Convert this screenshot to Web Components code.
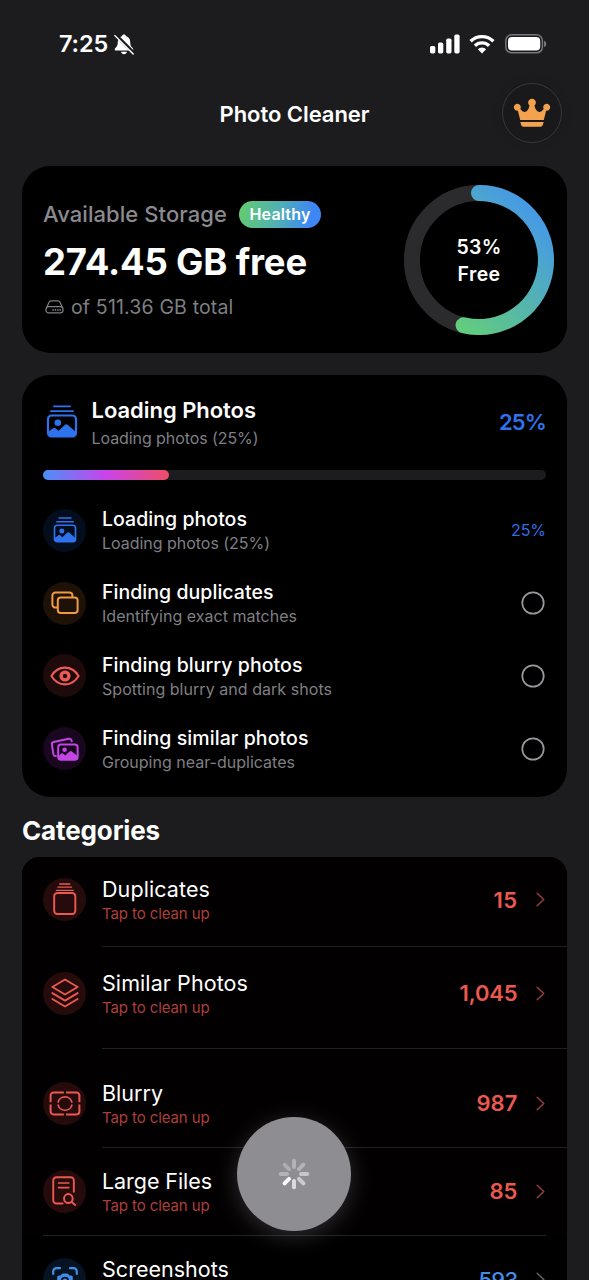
<!DOCTYPE html>
<html lang="en">
<head>
<meta charset="utf-8">
<title>Photo Cleaner</title>
<style>
html,body{margin:0;height:100%;overflow:hidden;background:#1c1c1e}
body{font-family:Inter,"Liberation Sans",sans-serif;color:#fff}
</style>
</head>
<body>
<photo-cleaner></photo-cleaner>
<script>
const ICONS = {
  bell: ['0 0 20 22', `<path fill="#fff" d="M10 .6c-1 0-1.700.6-1.900 1.500C5.200 3 3.900 5.300 3.800 8c-.1 3.500-.6 4.700-2.200 6.500-.7.8-.9 1.300-.8 1.900.1.700.7 1 1.400 1h15.600c.7 0 1.300-.3 1.400-1 .1-.6-.1-1.100-.8-1.900C16.800 12.700 16.300 11.500 16.200 8c-.1-2.700-1.400-5-4.300-5.900C11.700 1.200 11 .6 10 .6zM7 18.700c.3 1.500 1.500 2.500 3 2.500s2.700-1 3-2.500z"/><path d="M1.700.9 19.900 20" stroke="#1c1c1e" stroke-width="3.600"/><path d="M.9 1.700 19.200 20.900" stroke="#fff" stroke-width="1.500" stroke-linecap="round"/>`],
  signal: ['0 0 30 20', `<g fill="#fff"><rect x="0" y="12" width="5.300" height="7.400" rx="1.600"/><rect x="8" y="8.600" width="5.300" height="10.800" rx="1.600"/><rect x="16.200" y="4.600" width="5.300" height="14.800" rx="1.600"/><rect x="24.300" y=".6" width="5.300" height="18.800" rx="1.600"/></g>`],
  wifi: ['0 0 26 20', `<g fill="none" stroke="#fff" stroke-width="3.400"><path d="M1.600 7.300a16.200 16.200 0 0 1 22.800 0"/><path d="M5.900 11.800a10 10 0 0 1 14.200 0"/></g><path fill="#fff" d="M13 19.400 8.900 15.200a5.800 5.800 0 0 1 8.200 0z"/>`],
  battery: ['0 0 42 20', `<rect x=".8" y=".8" width="36.600" height="18" rx="5.800" fill="none" stroke="#77777a" stroke-width="1.500"/><rect x="3" y="3" width="32.200" height="13.600" rx="4" fill="#fff"/><path d="M39 6.700c3 1 3 5.500 0 6.400z" fill="#77777a"/>`],
  crown: ['0 0 38 30', `<path fill="#f4a24e" d="M7.200 22.300 4.900 12.900A3.500 3.500 0 1 1 7.300 11.300c2.200 2.900 4.300 3.600 6.200 2.300 1.600-1.200 2.400-3.200 3-6a3.900 3.900 0 1 1 5 0c.6 2.800 1.400 4.800 3 6 1.900 1.300 4 .6 6.200-2.300a3.500 3.500 0 1 1 2.400 1.600l-2.300 9.400zM7.300 24.300h23.400l-.8 3c-.3 1.300-1.200 1.900-2.500 1.900H10.600c-1.300 0-2.200-.6-2.500-1.900z"/>`],
  drive: ['0 0 20 15', `<g fill="none" stroke="currentColor" stroke-width="1.300"><path d="M1.300 9 4.200 2.500C4.600 1.500 5.300 1 6.400 1h7.200c1.100 0 1.800.5 2.200 1.500L18.700 9"/><rect x="1.100" y="7.200" width="17.800" height="6.600" rx="2.600"/></g><g fill="currentColor"><circle cx="8.500" cy="10.600" r=".9"/><circle cx="11" cy="10.600" r=".9"/><circle cx="13.500" cy="10.600" r=".9"/><circle cx="16" cy="10.600" r=".9"/></g>`],
  photos: ['0 0 32 34', `<path d="M8 1.400h16M5 6.300h22" stroke="currentColor" stroke-width="2" stroke-linecap="round"/><rect x="2" y="10.800" width="28" height="21.600" rx="3.600" fill="none" stroke="currentColor" stroke-width="2.200"/><circle cx="11.800" cy="18.200" r="3.300" fill="currentColor"/><path fill="currentColor" d="M2 27.700 7 23.900c.8-.7 1.700-.7 2.500 0l3 2.600 6.300-5.900c1-.9 2.100-.9 3.100 0l8.100 7.100v1.900c0 1.600-1 2.600-2.600 2.600H4.600C3 32.200 2 31.200 2 29.600z"/>`],
  copies: ['0 0 28 24', `<g fill="none" stroke="currentColor" stroke-width="2"><path d="M6.600 16.600H4.400A3 3 0 0 1 1.400 13.600V4.600a3 3 0 0 1 3-3H18.400a3 3 0 0 1 3 3V6"/><rect x="6.800" y="6.600" width="19.800" height="15.400" rx="3"/></g>`],
  eye: ['0 0 30 20', `<path d="M1.400 10C4.500 4.900 9.300 1.600 15 1.600S25.500 4.900 28.600 10C25.500 15.100 20.700 18.400 15 18.400S4.500 15.100 1.400 10z" fill="none" stroke="currentColor" stroke-width="2.100" stroke-linejoin="round"/><circle cx="15" cy="10" r="3.900" fill="none" stroke="currentColor" stroke-width="3.400"/>`],
  similar: ['0 0 28 24', `<g fill="none" stroke="currentColor" stroke-width="2"><path d="M5.700 18.800 4.600 19c-1.300.2-1.900-.3-2.200-1.600L.9 7.600C.7 6.200 1.200 5.300 2.600 5L17.700 1.800c1.500-.3 2.500.3 2.900 1.900L21 5"/><rect x="7.200" y="7.400" width="19.400" height="15.400" rx="2.800"/></g><circle cx="13.600" cy="12.800" r="2.300" fill="currentColor"/><path fill="currentColor" d="m7.200 19.200 2.900-2.500c.7-.6 1.300-.6 2 0l2.100 1.800 4.400-4c.8-.7 1.500-.7 2.300 0l5.700 4.600v2.200c0 .9-.6 1.500-1.500 1.500H8.700c-.9 0-1.500-.6-1.500-1.500z"/>`],
  stack: ['0 0 24 32', `<path d="M6.800 1h10.400M5 4.200h14M3.400 7.300h17.200" stroke="currentColor" stroke-width="1.300" stroke-linecap="round"/><rect x="1.200" y="10.100" width="21.600" height="20.900" rx="3.200" fill="none" stroke="currentColor" stroke-width="2"/>`],
  layers: ['0 0 28 30', `<g fill="none" stroke="currentColor" stroke-width="1.900" stroke-linejoin="round" stroke-linecap="round"><path d="M14 1.500 26.600 9 14 16.500 1.400 9z"/><path d="m1.400 15.100 12.600 7.500 12.600-7.500M1.400 21l12.600 7.500L26.600 21"/></g>`],
  blur: ['0 0 32 26', `<g fill="none" stroke="currentColor" stroke-width="2"><path d="M14.900 1.600H4.600a3 3 0 0 0-3 3v7M17.100 1.600h10.300a3 3 0 0 1 3 3v7M1.600 14v7.400a3 3 0 0 0 3 3h10.300M30.400 14v7.400a3 3 0 0 1-3 3H17.100"/></g><g fill="none" stroke="currentColor" stroke-width="1.800"><path d="M9 12.100a7.100 7.100 0 0 1 14 0M9 14.100a7.100 7.100 0 0 0 14 0"/></g>`],
  file: ['0 0 26 30', `<g fill="none" stroke="currentColor" stroke-width="2" stroke-linecap="round"><path d="M11 27.500H4.500a3.200 3.200 0 0 1-3.200-3.200V4.500a3.200 3.200 0 0 1 3.200-3.200h15a3.200 3.200 0 0 1 3.200 3.200v11.200"/><path d="M6.800 7h10.600M6.800 11.600h10.600" stroke-width="1.700"/><circle cx="17" cy="22.600" r="4.500"/><path d="m20.400 26 3.600 3"/></g>`],
  shot: ['0 0 26 26', `<g fill="none" stroke="currentColor" stroke-width="2.200" stroke-linecap="round"><path d="M1.200 7V4.400a3.200 3.200 0 0 1 3.200-3.200H8M18 1.200h3.600a3.200 3.200 0 0 1 3.200 3.200V7M1.200 19v2.600a3.200 3.200 0 0 0 3.200 3.200H8M18 24.800h3.600a3.200 3.200 0 0 0 3.200-3.200V19"/></g><path fill="currentColor" fill-rule="evenodd" d="M5.200 10.400c0-1.200.7-1.900 1.900-1.900h1.500l1-1.300c.4-.5.9-.7 1.500-.7h3.800c.6 0 1.100.2 1.500.7l1 1.300h1.500c1.200 0 1.900.7 1.900 1.900v6.800c0 1.200-.7 1.900-1.900 1.900H7.100c-1.200 0-1.900-.7-1.900-1.900zM13 9.700a4 4 0 1 0 0 8 4 4 0 0 0 0-8zm0 1.700a2.300 2.300 0 1 1 0 4.600 2.300 2.300 0 0 1 0-4.600z"/>`],
  pending: ['0 0 24 24', `<circle cx="12" cy="12" r="10.700" fill="none" stroke="#98989d" stroke-width="1.700"/>`],
  chevron: ['0 0 10 16', `<path d="m1.200 1.400 7 6.600-7 6.600" fill="none" stroke="currentColor" stroke-width="1.500" stroke-linecap="round" stroke-linejoin="round"/>`]
};

class Base extends HTMLElement {
  connectedCallback() {
    if (this.shadowRoot) return;
    this.attachShadow({ mode: 'open' }).innerHTML = `<style>${this.css()}</style>${this.html()}`;
    this.ready();
  }
  a(n, d = '') { return this.getAttribute(n) ?? d; }
  ready() {}
}

/* One line of text, tracked so that it fills the width given in "w". */
customElements.define('ui-text', class extends Base {
  css() { return `:host{display:block;white-space:nowrap;line-height:${this.a('lh', '24')}px;font-size:${this.a('size', '20')}px;font-weight:${this.a('weight', '400')};color:${this.a('color', 'inherit')}}span{display:inline-block}`; }
  html() { return '<span><slot></slot></span>'; }
  ready() {
    const w = +this.a('w', 0), s = this.shadowRoot.querySelector('span');
    if (!w) return;
    const n = this.textContent.length;
    s.style.letterSpacing = ((w - s.getBoundingClientRect().width) / n).toFixed(3) + 'px';
  }
});

customElements.define('ui-icon', class extends Base {
  css() { return `:host{display:block;flex:none;width:${this.a('w')}px;height:${this.a('h')}px}svg{display:block;width:100%;height:100%;overflow:visible}`; }
  html() { const [vb, body] = ICONS[this.a('name')]; return `<svg viewBox="${vb}" preserveAspectRatio="none">${body}</svg>`; }
});

customElements.define('icon-disc', class extends Base {
  css() { return `:host{display:grid;place-items:center;flex:none;width:43px;height:43px;border-radius:50%;background:${this.a('bg')};color:${this.a('color')}}ui-icon{margin-bottom:${this.a('lift', '0')}px}`; }
  html() { return `<ui-icon name="${this.a('icon')}" w="${this.a('w')}" h="${this.a('h')}"></ui-icon>`; }
});

customElements.define('status-bar', class extends Base {
  css() { return `:host{display:flex;height:88px;align-items:center;padding:0 42px 0 59px;box-sizing:border-box}.sp{flex:1}.bell{margin-left:6px}.wifi{margin:0 10px 0 9px}.sig,.wifi{margin-bottom:1px}`; }
  html() { return `<ui-text size="23.500" weight="560" w="49">7:25</ui-text><ui-icon class="bell" name="bell" w="20" h="21"></ui-icon><span class="sp"></span><ui-icon class="sig" name="signal" w="30" h="20"></ui-icon><ui-icon class="wifi" name="wifi" w="26" h="20"></ui-icon><ui-icon name="battery" w="42" h="20"></ui-icon>`; }
});

customElements.define('nav-header', class extends Base {
  css() { return `:host{display:grid;grid-template-columns:1fr auto 1fr;align-items:center;height:60px;padding:0 27px}ui-text{padding-top:1px}
  .crown{justify-self:end;box-sizing:border-box;width:60px;height:60px;border-radius:50%;border:1.300px solid #38383a;background:#19191b;display:grid;place-items:center;box-shadow:0 0 12px rgba(0,0,0,.12)}`; }
  html() { return `<span></span><ui-text size="22" weight="560" w="150">${this.textContent}</ui-text><div class="crown"><ui-icon name="crown" w="38" h="29.500"></ui-icon></div>`; }
});

customElements.define('storage-ring', class extends Base {
  css() { return `:host{display:grid;width:150px;height:150px;place-items:center}svg,div{grid-area:1/1}div{display:grid;justify-items:center;padding-top:2px}`; }
  html() {
    const a = 193.300 * Math.PI / 180, x = 75 + 67 * Math.sin(a), y = 75 - 67 * Math.cos(a);
    return `<svg width="150" height="150"><defs><linearGradient id="g" gradientUnits="userSpaceOnUse" x1="150" y1="0" x2="0" y2="150"><stop offset="0" stop-color="#3f8dff"/><stop offset="1" stop-color="#6bde59"/></linearGradient></defs>
    <circle cx="75" cy="75" r="67" fill="none" stroke="#2b2b2d" stroke-width="16"/>
    <path d="M75 8A67 67 0 1 1 ${x} ${y}" fill="none" stroke="url(#g)" stroke-width="16" stroke-linecap="round"/></svg>
    <div><ui-text size="19.500" weight="560" lh="27" w="45">53%</ui-text><ui-text size="19.500" weight="560" lh="27" w="43">Free</ui-text></div>`;
  }
});

customElements.define('storage-card', class extends Base {
  css() { return `:host{display:flex;justify-content:space-between;align-items:center;box-sizing:border-box;height:187px;padding:0 13px 0 21px;border-radius:28px;background:#000}
  .top,.sub{display:flex;align-items:center}.col{padding-top:1px}
  .pill{margin-left:12px;height:27px;width:82px;border-radius:14px;display:grid;place-items:center;background:linear-gradient(100deg,#62cb72 4%,#50b0b4 48%,#3d86f5 88%)}
  .big{margin:11.500px 0 10px}.sub{color:#7f7f84;gap:7.500px;padding-left:1.500px}`; }
  html() { return `<div class="col"><div class="top"><ui-text size="22" weight="500" lh="28" color="#8a8a8f" w="184">Available Storage</ui-text><span class="pill"><ui-text size="16" weight="600" lh="26" w="61">Healthy</ui-text></span></div>
  <ui-text class="big" size="36.500" weight="700" lh="44" w="264">274.45 GB free</ui-text>
  <div class="sub"><ui-icon name="drive" w="19" h="14"></ui-icon><ui-text size="19.500" lh="26" w="162.500">of 511.36 GB total</ui-text></div></div><storage-ring></storage-ring>`; }
});

customElements.define('task-row', class extends Base {
  css() { return `:host{display:flex;align-items:center;height:72.800px}.t{flex:1;margin-left:16px;padding-top:2px}.c{margin-right:1px}`; }
  html() { return `<icon-disc icon="${this.a('icon')}" w="${this.a('iw')}" h="${this.a('ih')}" color="${this.a('color')}" bg="${this.a('bg')}"></icon-disc>
  <div class="t"><ui-text size="19.500" weight="500" lh="24" w="${this.a('w1')}">${this.a('label')}</ui-text><ui-text size="16" lh="24" color="#7f7f84" w="${this.a('w2')}">${this.a('note')}</ui-text></div>
  ${this.a('value') ? `<ui-text size="16" color="#2f6fe6" w="35">${this.a('value')}</ui-text>` : '<ui-icon class="c" name="pending" w="24" h="24"></ui-icon>'}`; }
});

customElements.define('progress-card', class extends Base {
  css() { return `:host{display:block;box-sizing:border-box;height:422px;margin-top:22px;padding:21px 21px 0;border-radius:28px;background:#000}
  .head{display:flex;align-items:center;height:53px;color:#2f72ee}.h{flex:1;color:#fff;margin-left:13.500px;padding-top:2px}.pi{margin:0 0 3px 3px}.p{margin-bottom:1px}
  .bar{height:10.500px;margin-top:20.500px;border-radius:6px;background:#1c1c1e}.bar i{display:block;height:100%;width:126px;border-radius:6px;background:linear-gradient(90deg,#4b90f8,#c944ea 50%,#ef4d68)}
  .rows{margin-top:13.900px}`; }
  html() { return `<div class="head"><ui-icon class="pi" name="photos" w="32" h="33"></ui-icon><div class="h"><ui-text size="22" weight="560" lh="28" w="164.500">Loading Photos</ui-text><ui-text size="16" lh="28" color="#7f7f84" w="167">Loading photos (25%)</ui-text></div><ui-text class="p" size="22" weight="560" w="47">25%</ui-text></div>
  <div class="bar"><i></i></div><div class="rows">
  <task-row icon="photos" iw="24" ih="26" color="#2f72ee" bg="#030d1c" label="Loading photos" note="Loading photos (25%)" w1="145" w2="168" value="25%"></task-row>
  <task-row icon="copies" iw="28" ih="24" color="#f09a43" bg="#1e1207" label="Finding duplicates" note="Identifying exact matches" w1="171.500" w2="195"></task-row>
  <task-row icon="eye" iw="30" ih="20" color="#ec5a55" bg="#1f0a0b" label="Finding blurry photos" note="Spotting blurry and dark shots" w1="200.500" w2="230"></task-row>
  <task-row icon="similar" iw="28" ih="24" color="#c445e6" bg="#19061f" label="Finding similar photos" note="Grouping near-duplicates" w1="206.500" w2="193"></task-row></div>`; }
});

customElements.define('category-row', class extends Base {
  css() { return `:host{display:block;box-sizing:border-box;height:${this.a('h')}px;padding:${this.a('pt')}px 21px 0;position:relative;background:${this.a('tint', '#030001')}}
  .r{display:flex;align-items:center;height:44px}.t{flex:1;margin-left:16px;padding-top:4.500px}.n{margin-right:18.500px}.line{position:absolute;bottom:0;left:${this.a('left', '80')}px;right:${this.a('right', '0')}px;height:1px;background:#202123}.chev{color:${this.a('chev', '#96403e')};margin-right:.5px}`; }
  html() { const c = this.a('color', '#e9594f'); return `<div class="r"><icon-disc icon="${this.a('icon')}" w="${this.a('iw')}" h="${this.a('ih')}" lift="${this.a('lift', '0')}" color="${c}" bg="${this.a('bg', '#260b0c')}"></icon-disc>
  <div class="t"><ui-text size="21.500" lh="25" w="${this.a('w1')}">${this.a('label')}</ui-text><ui-text size="15" lh="24" color="#ac3f3c" w="107.500">Tap to clean up</ui-text></div>
  <ui-text class="n" size="22" weight="${this.a('cw', '600')}" color="${c}" w="${this.a('w2')}">${this.a('count')}</ui-text><ui-icon class="chev" name="chevron" w="9.500" h="15"></ui-icon></div><div class="line"></div>`; }
});

customElements.define('category-list', class extends Base {
  css() { return `:host{display:block;border-radius:18px 18px 0 0;overflow:hidden;background:#000}`; }
  html() { return `<category-row h="90" pt="20.500" icon="stack" iw="23.500" ih="32" lift="2" label="Duplicates" w1="108" count="15" w2="24"></category-row>
  <category-row h="102" pt="24" icon="layers" iw="28" ih="30" label="Similar Photos" w1="146" count="1,045" w2="58"></category-row>
  <category-row h="98.500" pt="32" icon="blur" iw="32" ih="25" label="Blurry" w1="61" count="987" w2="41"></category-row>
  <category-row h="88.500" pt="21.500" left="21" right="21" icon="file" iw="25" ih="30" label="Large Files" w1="110" count="85" w2="28"></category-row>
  <category-row h="88" pt="21.500" tint="#000" color="#438ce8" bg="#061322" chev="#66666a" icon="shot" iw="26" ih="26" label="Screenshots" w1="127" count="593" cw="500" w2="39"></category-row>`; }
});

customElements.define('busy-badge', class extends Base {
  css() { return `:host{display:grid;place-items:center;width:114px;height:114px;border-radius:50%;background:#8e8d92;box-shadow:0 5px 22px rgba(190,190,205,.24)}`; }
  html() {
    const op = [.32, .34, .5, .55, .68, .95, .34, .28];
    return `<svg width="32" height="32" viewBox="-16 -16 32 32">${op.map((o, i) => `<path d="M0-7V-13.300" stroke="#fff" stroke-opacity="${o}" stroke-width="4" stroke-linecap="round" transform="rotate(${i * 45})"/>`).join('')}</svg>`;
  }
});

customElements.define('photo-cleaner', class extends Base {
  css() { return `:host{display:block;position:relative;width:589px;height:1280px;overflow:hidden;background:#1c1c1e}
  status-bar{margin-bottom:-5px}main{padding:23px 22px 0}.cat{margin:17.500px 0 10.500px}busy-badge{position:absolute;left:237px;top:1117px}`; }
  html() { return `<status-bar></status-bar><nav-header>Photo Cleaner</nav-header><main><storage-card></storage-card><progress-card></progress-card><ui-text class="cat" size="26" weight="700" lh="32" w="138">Categories</ui-text><category-list></category-list></main><busy-badge></busy-badge>`; }
});
</script>
</body>
</html>
